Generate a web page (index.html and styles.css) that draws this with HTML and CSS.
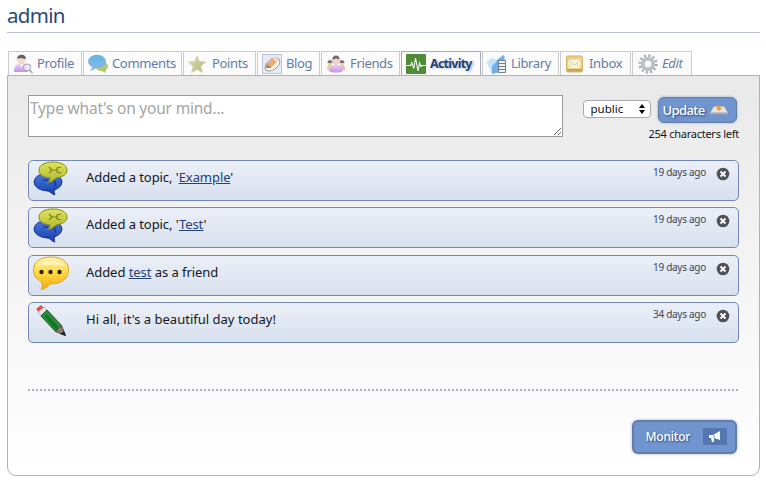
FILE: index.html
```html
<!DOCTYPE html>
<html lang="en">
<head>
<meta charset="utf-8">
<title>admin</title>
<link rel="stylesheet" href="styles.css">
</head>
<body>
<svg class="defs" width="0" height="0" aria-hidden="true">
  <defs>
    <linearGradient id="lime" x2="0" y2="1"><stop stop-color="#dfe45c"/><stop offset="1" stop-color="#aeb52a"/></linearGradient>
    <linearGradient id="blue" x2="0" y2="1"><stop stop-color="#4c79d8"/><stop offset="1" stop-color="#1e49bd"/></linearGradient>
    <linearGradient id="yellow" x2="0" y2="1"><stop stop-color="#fff2b5"/><stop offset=".5" stop-color="#ffd83e"/><stop offset="1" stop-color="#f0a80c"/></linearGradient>
    <linearGradient id="sky" x2="0" y2="1"><stop stop-color="#4aabdf"/><stop offset="1" stop-color="#72a9e2"/></linearGradient>
    <linearGradient id="violet" x2="0" y2="1"><stop stop-color="#e4c4f5"/><stop offset="1" stop-color="#c07fe6"/></linearGradient>
    <linearGradient id="gold" x2="1" y2="1"><stop stop-color="#d8d8a2"/><stop offset="1" stop-color="#a8a968"/></linearGradient>
    <symbol id="topic" viewBox="0 0 36 36">
      <ellipse cx="15" cy="21" rx="14" ry="9" fill="url(#blue)" stroke="#1c3788"/>
      <path d="M13 29c4 1 5 4 9 5-1-2-1-4 0-7z" fill="#1e49bd" stroke="#1c3788"/>
      <path d="M13 27h8v1h-8z" fill="#2853c4"/>
      <path d="M10 19h4l3 3M21 19l2 6" fill="none" stroke="#17347f" stroke-width="1.200"/>
      <path d="M20 1C12 1 6 4 6 9c0 5 4 7 11 8 0 2-1 3-3 5 5-1 7-3 9-5 6-1 11-3 11-8s-6-8-14-8z" fill="url(#lime)" stroke="#858c20"/>
      <path d="M16 6l3 3-3 3M18 9h6M28 6l-4 1v4l4 1" fill="none" stroke="#7b8117" stroke-width="1.200"/>
    </symbol>
    <symbol id="close" viewBox="0 0 14 14"><circle cx="7" cy="7" r="6.300" fill="#505257"/><path d="M4.500 4.500l5 5M9.500 4.500l-5 5" stroke="#fff" stroke-width="1.900"/></symbol>
  </defs>
</svg>

<h1 class="title">admin</h1>

<nav class="tabs">
  <a class="tab profile"><svg class="icon" viewBox="0 0 20 20"><path d="M1 18c0-6 2-8 7-8s7 3 7 8z" fill="url(#violet)"/><path d="M6 9h5l-2.500 5z" fill="#f7eef2"/><ellipse cx="8.500" cy="6" rx="4" ry="4.800" fill="#efd4c6"/><path d="M4 5c0-5 9-6 9 0-3 0-5-2-9 0z" fill="#4d4346"/><circle cx="14" cy="13.500" r="3.600" fill="#e9eaf0" fill-opacity=".8" stroke="#8c8fa0"/><path d="M16.500 16l3 3" stroke="#9c8e9d" stroke-width="1.500"/></svg><span>Profile</span></a>
  <a class="tab comments"><svg class="icon" viewBox="0 0 20 20"><path d="M12 8c5-1 8 2 8 4 0 2-1 3-2 4l-1 3-3-2c-4 0-6-2-6-4z" fill="#a3c058"/><ellipse cx="9" cy="7.500" rx="9" ry="6.800" fill="url(#sky)"/><path d="M5 12l-3 5 7-3z" fill="#72a9e2"/></svg><span>Comments</span></a>
  <a class="tab points"><svg class="icon" viewBox="0 0 20 20"><path d="M9 2l2.400 5.500 6.100.5-4.800 4.500 1.800 6L9 15.300 3.500 18.500l1.800-6L.5 8l6.100-.5z" fill="url(#gold)" stroke="#c6c591" stroke-width=".7"/></svg><span>Points</span></a>
  <a class="tab blog"><svg class="icon" viewBox="0 0 20 20"><rect x=".5" y=".5" width="19" height="19" fill="#e3e9f2" stroke="#b3bdcb"/><ellipse cx="10.500" cy="10.500" rx="8.500" ry="5" transform="rotate(-38 10.500 10.500)" fill="#fff" stroke="#888"/><path d="M4 14l1-4 8-7 4 3-8 8z" fill="#f19a56"/><path d="M13 3l4 3-2 2-4-3z" fill="#e3dcda"/><path d="M4 14l1-4 4 4z" fill="#8d6e5a"/></svg><span>Blog</span></a>
  <a class="tab friends"><svg class="icon" viewBox="0 0 20 20"><path d="M1 16c0-5 2-6 4-6l3 6z" fill="#f0c870"/><path d="M19 16c0-5-2-6-4-6l-3 6z" fill="#f0ae7c"/><circle cx="4" cy="9.500" r="2.200" fill="#ecc9b9"/><circle cx="16" cy="9.500" r="2.200" fill="#ecc9b9"/><path d="M1.500 9c0-4 5-4 5 0zM13.500 9c0-4 5-4 5 0z" fill="#65575b"/><path d="M3 17c0-5 3-6 7-6s7 1 7 6c-3 2-11 2-14 0z" fill="url(#violet)"/><ellipse cx="10" cy="7" rx="3.200" ry="4.200" fill="#f0cdbd"/><path d="M6.300 6c-.5-6 8-6 7.400 0-2-2-5-2-7.400 0z" fill="#5c5054"/></svg><span>Friends</span></a>
  <a class="tab activity active"><svg class="icon" viewBox="0 0 20 20"><rect width="20" height="20" rx="1" fill="#4f8b37"/><path d="M0 11.500h4.500l1.300-3 2 6L9.500 4l2.500 13 1.500-8 1.500 3.500 1.200-1H20" fill="none" stroke="#f2faee" stroke-width="1.100"/></svg><span>Activity</span></a>
  <a class="tab library"><svg class="icon" viewBox="0 0 20 20"><path d="M0 8l5-4 4 2 7-5 2 1v14L5 20z" fill="#9ad4f7"/><path d="M5 10L17 1v16L5 20z" fill="#57a5e4"/><path d="M0 8l5-4 5 3-5 5v8z" fill="#b7e1fa"/><path d="M11.500 6.500h7v12h-7zM11.500 9.500h7M11.500 12.500h7M11.500 15.500h7" fill="#eef2f6" stroke="#5d6570"/></svg><span>Library</span></a>
  <a class="tab inbox"><svg class="icon" viewBox="0 0 20 20"><rect x="1.500" y="2" width="16" height="16" rx="1.500" fill="#e9c767" stroke="#c9a84e"/><path d="M2 15h15v2.500H2z" fill="#bd9740"/><path d="M3.500 5.500h12v8.500h-12z" fill="#fcf7e5"/><path d="M4 6.500l5.500 4.500L15 6.500M4 13l3.500-3M15 13l-3.500-3" fill="none" stroke="#d1ba80"/></svg><span>Inbox</span></a>
  <a class="tab edit"><svg class="icon" viewBox="0 0 20 20"><circle cx="10" cy="10" r="8.200" fill="none" stroke="#9ea4ad" stroke-width="3" stroke-dasharray="2.100 2.193"/><circle cx="10" cy="10" r="5.200" fill="none" stroke="#afb4bc" stroke-width="3.800"/><circle cx="10" cy="10" r="3.200" fill="#f7f8fa"/></svg><span>Edit</span></a>
</nav>

<main class="panel">
  <form class="composer">
    <textarea class="message" placeholder="Type what's on your mind..."></textarea>
    <div class="controls">
      <div class="actions">
        <div class="select"><span>public</span><svg width="6" height="10" viewBox="0 0 6 10"><path d="M0 4l3-4 3 4zM0 6l3 4 3-4z"/></svg></div>
        <button class="button update" type="button"><span>Update</span><svg width="18" height="13" viewBox="0 0 18 13"><path d="M4 3.500h10L18 10H0z" fill="#e4e4e4"/><path d="M0 9.500h18v2H0z" fill="#a5a7ac"/><path d="M9 8V3M6.500 5.500h5M7.500 4L9 2.500 10.500 4" stroke="#ed9438" stroke-width="1.400" fill="none"/></svg></button>
      </div>
      <div class="count">254 characters left</div>
    </div>
  </form>

  <div class="feed">
    <article class="entry"><svg class="kind" viewBox="0 0 36 36"><use href="#topic"/></svg><p>Added a topic, '<a>Example</a>'</p><time>19 days ago</time><svg class="close"><use href="#close"/></svg></article>
    <article class="entry"><svg class="kind" viewBox="0 0 36 36"><use href="#topic"/></svg><p>Added a topic, '<a>Test</a>'</p><time>19 days ago</time><svg class="close"><use href="#close"/></svg></article>
    <article class="entry"><svg class="kind" viewBox="0 0 36 36"><path d="M18 1C7 1 .5 6 .5 14c0 6 3 9 8 12 1 3 1 5 0 8 4-2 7-4 9-6C29 28 35.500 22 35.500 14S29 1 18 1z" fill="url(#yellow)" stroke="#dfa52b"/><path d="M4 11C6 3 30 3 32 11c-8-3-20-3-28 0z" fill="#fff" fill-opacity=".4"/><g fill="#2c2418"><circle cx="8.500" cy="16" r="2.200"/><circle cx="17.500" cy="16" r="2.200"/><circle cx="26.500" cy="16" r="2.200"/></g></svg><p>Added <a>test</a> as a friend</p><time>19 days ago</time><svg class="close"><use href="#close"/></svg></article>
    <article class="entry"><svg class="kind" viewBox="0 0 36 36"><path d="M3 6l5-4 4 4-5 5z" fill="#df5146"/><path d="M5 9l6-5 4 4-6 6z" fill="#dce2e6" stroke="#8e9a9b" stroke-width=".6"/><path d="M8 13l6-6 15 16-6 6z" fill="#2d8f3b" stroke="#225329"/><path d="M11 13l3-2 12 13-3 3z" fill="#137729"/><path d="M22.500 28.500l6-6 4 10z" fill="#8b8072" stroke="#46463f"/><path d="M27 31l4-3 2 5z" fill="#25282a"/></svg><p class="status">Hi all, it's a beautiful day today!</p><time>34 days ago</time><svg class="close"><use href="#close"/></svg></article>
  </div>

  <div class="divider"></div>
  <footer class="footer"><button class="button monitor" type="button"><span>Monitor</span><svg width="24" height="17" viewBox="0 0 24 17"><path fill="#5377ae" d="M0 0h24v17H0z"/><path d="M6 7h4l7-4v9l-6-2v4H9L8 10H6z" fill="#fff"/><path d="M11 7v3" stroke="#7c9bcc"/></svg></button></footer>
</main>
</body>
</html>
```

FILE: styles.css
```css
* { box-sizing: border-box; }
body { margin: 0; width: 766px; height: 484px; overflow: hidden; background: #fff; color: #111722; font-family: "Noto Sans", sans-serif; font-size: 13px; }
.defs { display: block; height: 0; }
.title { margin: 0 6px 18px 7px; height: 33px; border-bottom: 1px solid #bac4d5; color: #294779; font-size: 20.5px; font-weight: 400; line-height: 30px; letter-spacing: -.7px; }
.tabs { display: grid; grid-template-columns: 74px 99px 73px 63px 79px 80px 77px 71px 60px; gap: 1px; height: 24px; margin-left: 8px; }
.tab { display: flex; align-items: center; gap: 4px; min-width: 0; padding-left: 4px; border: 1px solid #ccccd0; border-bottom: 0; background: #fbfbfc; color: #647ba6; white-space: nowrap; line-height: 23px; letter-spacing: -.35px; }
.icon { flex: none; width: 20px; height: 20px; opacity: .85; }
.active .icon { opacity: 1; }
.active { border-color: #a5aab8; color: #263f71; font-weight: 700; font-size: 12.5px; letter-spacing: -.75px; text-shadow: 2px 1px 2px #b9c7df; }
.edit { padding-left: 5px; font-style: italic; }
.panel { display: flex; flex-direction: column; width: 753px; height: 401px; margin-left: 7px; padding: 19px 20px 0; border: 1px solid #b1b2b5; border-radius: 0 0 9px 9px; background: linear-gradient(#e9e9e9, #fff); }
.composer { display: flex; justify-content: space-between; height: 65px; margin: 0; }
.message { display: block; width: 535px; height: 42px; margin: 0; padding: 1px; border: 1px solid #9b9b9b; border-radius: 0; background: #fff; font: 15.500px/23px "Noto Sans", sans-serif; letter-spacing: -.2px; resize: both; outline: 0; }
.message::placeholder { color: #a5a5a5; }
.controls { width: 160px; padding-top: 1px; }
.actions { display: flex; justify-content: flex-end; align-items: center; gap: 7px; height: 27px; padding-right: 2.500px; }
.select { display: flex; align-items: center; justify-content: space-between; width: 68px; height: 18px; margin-top: -2px; padding: 0 5px 0 7px; border: 1px solid #aaaaad; border-radius: 4px; background: #fff; color: #111; font-size: 11.500px; }
.button { display: flex; align-items: center; border: 2px solid #647da6; border-radius: 6px; background: #7094ce; color: #fff; font-family: inherit; text-shadow: 1px 1px 2px #294779; box-shadow: 0 0 3px #9baccc; padding: 0; }
.update { width: 79px; height: 26px; padding-left: 4px; gap: 4px; font-size: 13px; font-weight: 500; letter-spacing: -.6px; border-width: 1.500px; }
.update span { width: 43px; text-align: left; }
.count { margin-top: 2px; text-align: right; font-size: 11px; line-height: 17px; white-space: nowrap; letter-spacing: -.26px; }
.feed { display: flex; flex-direction: column; gap: 6.330px; }
.entry { display: flex; width: 711px; height: 41px; padding: 0 8px 0 4px; border: 1px solid #7188b4; border-radius: 5px; background: linear-gradient(#ebeff7, #d8e0ee); }
.kind { flex: none; width: 36px; height: 36px; }
.entry p { flex: 1; margin: 6px 0 0 17px; line-height: 20px; white-space: nowrap; letter-spacing: -.06px; }
.entry .status { letter-spacing: .01px; }
.entry a { color: #21437a; text-decoration: underline; }
.entry time { margin: 4px 10px 0 0; color: #3a4558; font-size: 10px; line-height: 15px; letter-spacing: -.28px; }
.close { width: 14px; height: 14px; margin-top: 6px; }
.divider { height: 2px; margin-top: 46px; background: repeating-linear-gradient(90deg, #abb4c3 0 2px, transparent 2px 4px); }
.footer { display: flex; justify-content: flex-end; padding: 29px 2.500px 0; }
.monitor { width: 105px; height: 34px; padding-left: 12px; gap: 13px; font-size: 12px; font-weight: 500; letter-spacing: -.2px; }
```
